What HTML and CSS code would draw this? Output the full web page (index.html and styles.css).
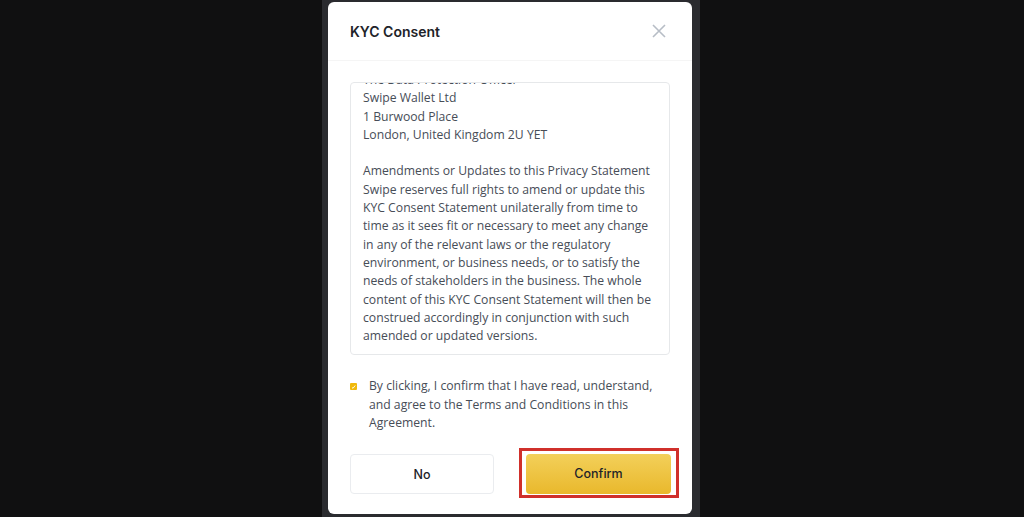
FILE: index.html
```html
<!DOCTYPE html>
<html lang="en">
<head>
  <meta charset="UTF-8">
  <meta name="viewport" content="width=device-width, initial-scale=1.0">
  <title>KYC Consent</title>
  <link rel="stylesheet" href="styles.css">
</head>
<body>
  <div class="backdrop">
    <div class="modal">
      <div class="modal-header">
        <h2 class="modal-title">KYC Consent</h2>
        <svg class="close-icon" width="14" height="14" viewBox="0 0 14 14">
          <path d="M1 1L13 13M13 1L1 13" stroke="#b7bdc6" stroke-width="1.6" fill="none"/>
        </svg>
      </div>
      <div class="modal-body">
        <div class="statement">
          <div class="statement-inner">
            <p>The Data Protection Officer<br>Swipe Wallet Ltd<br>1 Burwood Place<br>London, United Kingdom 2U YET</p>
            <p>Amendments or Updates to this Privacy Statement<br>Swipe reserves full rights to amend or update this KYC Consent Statement unilaterally from time to time as it sees fit or necessary to meet any change in any of the relevant laws or the regulatory environment, or business needs, or to satisfy the needs of stakeholders in the business. The whole content of this KYC Consent Statement will then be construed accordingly in conjunction with such amended or updated versions.</p>
          </div>
        </div>
        <label class="agree">
          <span class="checkbox">
            <svg width="7" height="7" viewBox="0 0 7 7"><path d="M2 4.5L3 5.3L5.2 2.5" stroke="#fff" stroke-width="0.9" fill="none"/></svg>
          </span>
          <span class="agree-text">By clicking, I confirm that I have read, understand, and agree to the Terms and Conditions in this Agreement.</span>
        </label>
        <div class="actions">
          <button class="btn btn-no">No</button>
          <div class="highlight">
            <button class="btn btn-confirm">Confirm</button>
          </div>
        </div>
      </div>
    </div>
  </div>
</body>
</html>
```

FILE: styles.css
```css
html, body {
  margin: 0;
  height: 100%;
}
body {
  background: #101011;
  font-family: "Open Sans", "Noto Sans", sans-serif;
  overflow: hidden;
}
.backdrop {
  width: 378px;
  height: 517px;
  margin-left: 322px;
  background: #2a2b2f;
  padding: 2px 8px 0 6px;
  box-sizing: border-box;
}
.modal {
  background: #fff;
  border-radius: 6px;
  height: 512px;
  overflow: hidden;
}
.modal-header {
  display: flex;
  align-items: center;
  justify-content: space-between;
  height: 58px;
  padding: 0 26px 0 22px;
  border-bottom: 1px solid #f5f5f5;
}
.modal-title {
  margin: 0;
  font-family: "Inter", "Liberation Sans", sans-serif;
  font-size: 14px;
  font-weight: 600;
  color: #1e2329;
}
.modal-body {
  padding: 21px 22px 0 22px;
}
.statement {
  height: 271px;
  border: 1px solid #e6e8ea;
  border-radius: 4px;
  overflow: hidden;
  padding: 0 12px;
}
.statement-inner {
  margin-top: -12px;
  font-size: 12.2px;
  line-height: 18.3px;
  color: #474d57;
}
.statement-inner p {
  margin: 0 0 18.3px 0;
}
.agree {
  display: flex;
  align-items: flex-start;
  margin-top: 22px;
}
.checkbox {
  flex: none;
  width: 7px;
  height: 7px;
  margin-top: 6px;
  margin-right: 12px;
  background: #f0b90b;
  border-radius: 1px;
  display: flex;
}
.agree-text {
  font-size: 12.2px;
  line-height: 18.5px;
  color: #474d57;
}
.actions {
  display: flex;
  align-items: center;
  justify-content: space-between;
  margin-top: 15px;
}
.btn {
  font-family: "Inter", "Liberation Sans", sans-serif;
  font-size: 12.5px;
  font-weight: 500;
  color: #1e2329;
  border-radius: 4px;
  cursor: pointer;
}
.btn-no {
  width: 144px;
  height: 40px;
  margin-top: 3px;
  background: #fff;
  border: 1px solid #eaecef;
}
.highlight {
  margin-right: -9px;
  border: 3px solid #d0302b;
  padding: 3px 5px 1px 4px;
}
.btn-confirm {
  display: block;
  width: 145px;
  height: 40px;
  border: none;
  background: linear-gradient(#f3d05a, #e9b82c);
}
```
